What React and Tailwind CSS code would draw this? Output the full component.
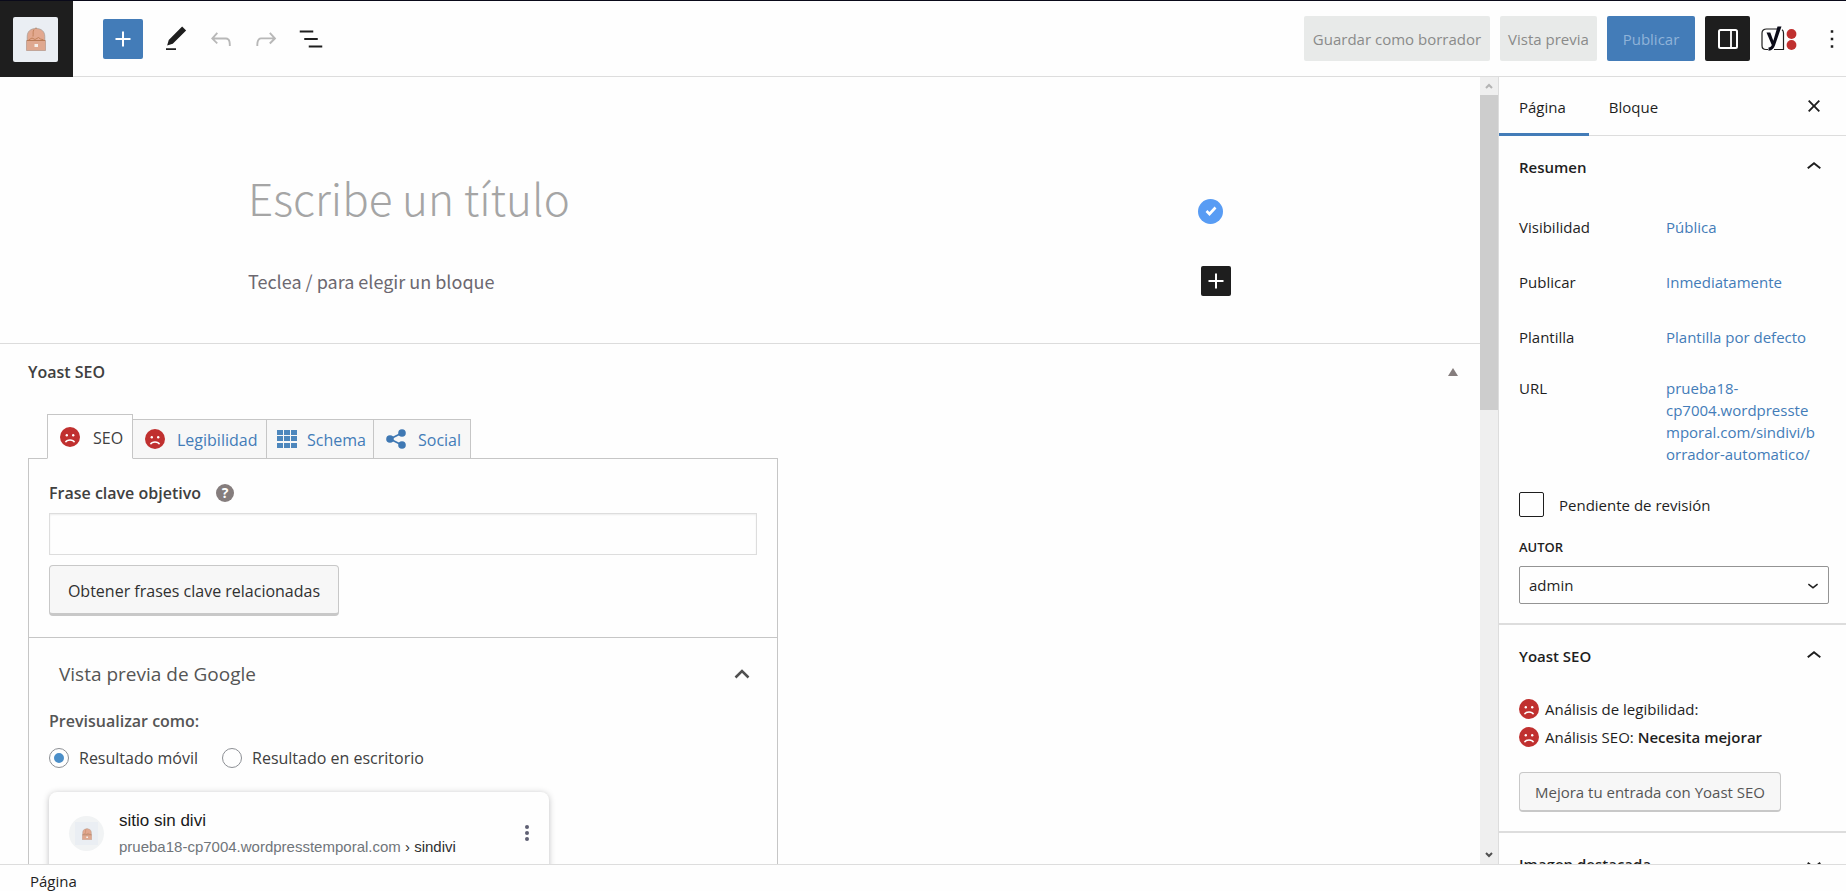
import { useState } from "react";

const PATHS = {
  plus: "M18 11.2h-5.2V6h-1.6v5.2H6v1.6h5.2V18h1.6v-5.2H18z",
  pencil:
    "M20.1 5.1L16.9 2 6.2 12.7l-1.3 4.4 4.5-1.3L20.1 5.1zM4 20.8h8v-1.5H4v1.5z",
  undo: "M18.3 11.7c-.6-.6-1.4-.9-2.3-.9H6.7l2.9-3.3-1.1-1-4.5 5L8.5 16l1-1-2.7-2.7H16c.5 0 .9.2 1.3.5 1 1 1 3.4 1 4.5v.3h1.5v-.2c0-1.5 0-4.3-1.5-5.7z",
  redo: "M15.6 6.5l-1.1 1 2.9 3.3H8c-.9 0-1.7.3-2.3.9-1.4 1.5-1.4 4.2-1.4 5.6v.2h1.5v-.3c0-1.1 0-3.5 1-4.5.3-.3.7-.5 1.3-.5h9.2L14.5 15l1.1 1.1 4.6-4.6-4.6-5z",
  list: "M13.8 5.2H3v1.5h10.8V5.2zm-3.6 12v1.5H21v-1.5H10.2zm7.2-6H6.6v1.5h10.8v-1.5z",
  up: "M6.5 12.4L12 8l5.5 4.4-.9 1.2L12 10l-4.5 3.6-1-1.2z",
  down: "M17.5 11.6L12 16l-5.5-4.4.9-1.2L12 14l4.5-3.6 1 1.2z",
  close:
    "M12 13.06l3.712 3.713 1.061-1.06L13.061 12l3.712-3.712-1.06-1.06L12 10.938 8.288 7.227l-1.061 1.06L10.939 12l-3.712 3.712 1.06 1.061L12 13.061z",
  more: "M13 19h-2v-2h2v2zm0-6h-2v-2h2v2zm0-6h-2V5h2v2z",
};

function Icon({ name, className = "size-[30px]" }) {
  return (
    <svg
      viewBox="0 0 24 24"
      fill="currentColor"
      aria-hidden="true"
      className={`shrink-0 ${className}`}
    >
      <path d={PATHS[name]} />
    </svg>
  );
}

function Hat({ className }) {
  return (
    <svg viewBox="0 0 20 24" aria-hidden="true" className={className}>
      <path
        d="M1.200 13.500V9.500C1.200 4.500 4.500 1.500 10 1.500s8.800 3 8.800 8v4z"
        fill="#e2a88f"
        stroke="#a59a92"
        strokeWidth="0.7"
      />
      <path
        d="M10 .5v1.500M8 2.500C6.500 5 7.500 6.500 7 9.500M2.500 13l3.500-2 3 1.500 3.500-2 2 1.500 3 .8"
        fill="none"
        stroke="#bd7d55"
        strokeWidth="0.9"
      />
      <path
        d="M.5 13.500h19v10H.5z"
        fill="#dfa88f"
        stroke="#b3978a"
        strokeWidth="0.7"
      />
      <path d="M1 13.500h18" stroke="#b9764f" strokeWidth="0.9" />
      <rect x="8.500" y="17" width="3.500" height="3" fill="#f6efea" />
    </svg>
  );
}

function SadFace() {
  return (
    <svg
      viewBox="0 0 20 20"
      aria-hidden="true"
      className="size-5 shrink-0"
    >
      <circle cx="10" cy="10" r="10" fill="#c0302f" />
      <circle cx="6.800" cy="8.300" r="1.200" fill="#fff" />
      <circle cx="13.200" cy="8.300" r="1.200" fill="#fff" />
      <path
        d="M5.500 15.300c1.500-3.200 7.500-3.200 9 0"
        fill="none"
        stroke="#fff"
        strokeWidth="1.500"
      />
    </svg>
  );
}

function DrawerIcon() {
  return (
    <svg viewBox="0 0 20 20" aria-hidden="true" className="size-5">
      <rect
        x="1"
        y="1"
        width="18"
        height="18"
        rx="1.500"
        fill="none"
        stroke="#fff"
        strokeWidth="2"
      />
      <path d="M13 1v18" stroke="#fff" strokeWidth="1.800" />
    </svg>
  );
}

function YoastIcon() {
  return (
    <svg viewBox="0 0 36 28" aria-hidden="true" className="h-7 w-9">
      <path
        d="M17 4H5.500C3 4 1 5.500 1 8v12.500c0 2.500 1.500 4 4 4H7M13 24.500h9.500V8c0-1.500-.5-2.500-1.500-3.200"
        fill="none"
        stroke="#1e1e1e"
        strokeWidth="1.200"
      />
      <path
        d="M5.500 7.500h3.800l3 8.300L16.500 1.500h4l-6.300 18.200c-1.300 3.800-3 5.800-6.700 6v-3.200c1.800-.2 2.800-1 3.300-2.500z"
        fill="#0b0b18"
      />
      <circle cx="30.500" cy="9" r="4.900" fill="#c0302f" />
      <circle cx="30.500" cy="20" r="4.900" fill="#c0302f" />
    </svg>
  );
}

function GridIcon() {
  return (
    <svg viewBox="0 0 20 18" aria-hidden="true" className="h-[18px] w-5">
      {[0, 7, 14].map((x) =>
        [0, 6, 13].map((y) => (
          <rect key={`${x}-${y}`} x={x} y={y} width="6" height="5" fill="#4d87bd" />
        ))
      )}
    </svg>
  );
}

function ShareIcon() {
  return (
    <svg viewBox="0 0 20 20" aria-hidden="true" className="size-5">
      <path d="M16 4L4 10l12 6" fill="none" stroke="#3f78b3" strokeWidth="1.800" />
      <circle cx="4" cy="10" r="3.800" fill="#3f78b3" />
      <circle cx="16" cy="4" r="3.800" fill="#3f78b3" />
      <circle cx="16" cy="16" r="3.800" fill="#3f78b3" />
    </svg>
  );
}

function Header() {
  return (
    <header className="flex h-[77px] shrink-0 border-t border-[#0a0a1a]">
      <a
        href="#"
        aria-label="Ver páginas"
        className="flex w-[73px] items-center bg-[#1e1e1e] pl-[13px]"
      >
        <span className="flex size-[45px] items-center justify-center rounded-xs bg-[#eaeef3]">
          <Hat className="h-6 w-5" />
        </span>
      </a>
      <div className="flex flex-1 items-center justify-between border-b border-[#dddddd] pl-[30px]">
        <div className="flex items-center">
          <button
            type="button"
            aria-label="Añadir bloque"
            className="mr-[18px] flex size-10 items-center justify-center rounded-xs bg-[#437cb8] text-white"
          >
            <Icon name="plus" />
          </button>
          <div className="flex items-center gap-[15px]">
            <button type="button" aria-label="Herramientas">
              <Icon name="pencil" />
            </button>
            <button type="button" aria-label="Deshacer" className="text-[#b8b8b8]">
              <Icon name="undo" />
            </button>
            <button type="button" aria-label="Rehacer" className="text-[#b8b8b8]">
              <Icon name="redo" />
            </button>
            <button type="button" aria-label="Vista de lista">
              <Icon name="list" />
            </button>
          </div>
        </div>
        <div className="flex items-center gap-[10px]">
          <button
            type="button"
            className="h-[45px] w-[186px] rounded-xs bg-[#e8eae9] pt-[2px] text-[#8a8a8a]"
          >
            Guardar como borrador
          </button>
          <button
            type="button"
            className="h-[45px] w-[97px] rounded-xs bg-[#e8eae9] pt-[2px] text-[#8a8a8a]"
          >
            Vista previa
          </button>
          <button
            type="button"
            className="h-[45px] w-[88px] rounded-xs bg-[#437cb8] pt-[2px] text-[#8fb3d9]"
          >
            Publicar
          </button>
          <button
            type="button"
            aria-label="Ajustes"
            className="mr-px flex size-[45px] items-center justify-center rounded-xs bg-[#1e1e1e] text-white"
          >
            <DrawerIcon />
          </button>
          <button type="button" aria-label="Yoast SEO">
            <YoastIcon />
          </button>
          <button type="button" aria-label="Opciones" className="ml-[10px] -mr-[1px]">
            <Icon name="more" />
          </button>
        </div>
      </div>
    </header>
  );
}

function Canvas() {
  return (
    <div className="shrink-0 border-b border-[#dcdcdc] px-[248px] pt-[79px] pb-[47px] font-['Noto_Sans_CJK_JP',sans-serif]">
      <div className="flex items-center justify-between pr-[9px]">
        <input
          type="text"
          aria-label="Título"
          placeholder="Escribe un título"
          className="h-[82px] min-w-0 flex-1 text-[44px] font-light outline-none placeholder:text-[#a5a5a5]"
        />
        <span className="mt-7 flex size-[25px] items-center justify-center rounded-full bg-[#589cf4]">
          <svg viewBox="0 0 12 10" aria-hidden="true" className="h-[10px] w-3">
            <path d="M1.500 5l3 3L10.500 1.500" fill="none" stroke="#fff" strokeWidth="2.600" />
          </svg>
        </span>
      </div>
      <div className="mt-7 flex items-center justify-between pr-px">
        <input
          type="text"
          aria-label="Bloque vacío"
          placeholder="Teclea / para elegir un bloque"
          className="h-[30px] min-w-0 flex-1 text-lg font-normal outline-none placeholder:text-[#6c6870]"
        />
        <button
          type="button"
          aria-label="Añadir bloque"
          className="flex size-[30px] items-center justify-center rounded-xs bg-[#1e1e1e] text-white"
        >
          <Icon name="plus" />
        </button>
      </div>
    </div>
  );
}

const tabs = [
  { name: "SEO", icon: <SadFace />, className: "w-[86px] gap-[13px] pl-3" },
  { name: "Legibilidad", icon: <SadFace />, className: "w-[134px] gap-3 pl-3" },
  { name: "Schema", icon: <GridIcon />, className: "w-[107px] gap-[10px] pl-[10px]" },
  { name: "Social", icon: <ShareIcon />, className: "w-[97px] gap-3 pl-3" },
];

function YoastBox() {
  const [tab, setTab] = useState("SEO");
  const [device, setDevice] = useState("movil");

  return (
    <section className="text-[#404040]">
      <div className="flex h-14 items-center justify-between pr-[22px] pl-7">
        <h2 className="text-base font-semibold">Yoast SEO</h2>
        <button type="button" aria-label="Plegar Yoast SEO">
          <svg viewBox="0 0 10 8" aria-hidden="true" className="h-2 w-[10px]">
            <path d="M5 0l5 8H0z" fill="#857d7d" />
          </svg>
        </button>
      </div>

      <div className="mx-7 mt-[14px] max-w-[750px]">
        <div role="tablist" className="-mb-px flex items-end pl-[19px]">
          {tabs.map((item) => (
            <button
              key={item.name}
              type="button"
              role="tab"
              aria-selected={tab === item.name}
              onClick={() => setTab(item.name)}
              className={`flex items-center border border-[#c6c6c6] text-base not-first:border-l-0 ${item.className} ${
                tab === item.name
                  ? "h-[45px] border-b-[#fefefe] bg-[#fefefe]"
                  : "h-10 bg-[#f7f7f7] text-[#437cb8]"
              }`}
            >
              {item.icon}
              <span className="pt-[2px]">{item.name}</span>
            </button>
          ))}
        </div>

        <div className="border border-[#c6c6c6]">
          <div className="border-b border-[#c6c6c6] px-5 pt-[22px] pb-[21px]">
            <div className="flex items-center gap-[15px]">
              <label htmlFor="frase" className="text-base leading-6 font-semibold">
                Frase clave objetivo
              </label>
              <button
                type="button"
                aria-label="Ayuda"
                className="flex size-[18px] items-center justify-center rounded-full bg-[#857d7d] text-sm font-bold text-white"
              >
                ?
              </button>
            </div>
            <input
              id="frase"
              type="text"
              className="mt-2 h-[42px] w-full border border-[#dddddd] px-2 shadow-[inset_0_1px_2px_rgba(0,0,0,0.07)]"
            />
            <button
              type="button"
              className="mt-[10px] h-[51px] w-[290px] rounded-sm border border-b-[3px] border-[#c8c8c8] bg-[#f7f7f7] pt-[2px] text-base text-[#303030]"
            >
              Obtener frases clave relacionadas
            </button>
          </div>

          <div className="px-5 pt-[22px]">
            <button
              type="button"
              className="flex w-full items-center justify-between pl-[10px] text-[19px] leading-7 text-[#555555]"
            >
              Vista previa de Google
              <svg viewBox="0 0 16 10" aria-hidden="true" className="mr-[7px] h-[10px] w-4">
                <path d="M1.500 8.500L8 2l6.500 6.500" fill="none" stroke="#505050" strokeWidth="2.500" />
              </svg>
            </button>
            <fieldset className="mt-[21px]">
              <legend className="text-base leading-6 font-semibold text-[#555555]">
                Previsualizar como:
              </legend>
              <div className="mt-[13px] flex gap-6 text-base leading-6">
                {[
                  ["movil", "Resultado móvil"],
                  ["escritorio", "Resultado en escritorio"],
                ].map(([value, label]) => (
                  <label key={value} className="flex items-center gap-[10px]">
                    <input
                      type="radio"
                      name="device"
                      checked={device === value}
                      onChange={() => setDevice(value)}
                      className="size-5 appearance-none rounded-full border border-[#8c8f94] bg-[#fefefe] checked:border-[5px] checked:border-[#fefefe] checked:bg-[#4a8ec8] checked:outline checked:-outline-offset-1 checked:outline-[#8c8f94]"
                    />
                    {label}
                  </label>
                ))}
              </div>
            </fieldset>
            <div className="mt-[22px] flex h-[200px] max-w-[500px] items-start rounded-lg pt-[15px] pr-[15px] pl-5 font-['Liberation_Sans',Arial,sans-serif] shadow-[0_1px_6px_rgba(32,33,36,0.28)]">
              <span className="mt-[9px] flex size-[35px] items-center justify-center rounded-full bg-[#f1f3f4]">
                <span className="flex size-[23px] items-center justify-center bg-[#eaeef3]">
                  <Hat className="h-3 w-[10px]" />
                </span>
              </span>
              <div className="ml-[15px] flex-1">
                <div className="text-[17px] leading-7 text-[#1a1a1a]">sitio sin divi</div>
                <div className="text-[15px] leading-6 text-[#70757a]">
                  prueba18-cp7004.wordpresstemporal.com{" "}
                  <span className="text-[#303030]">› sindivi</span>
                </div>
              </div>
              <button type="button" aria-label="Más" className="mt-[18px] mr-[5px]">
                <svg viewBox="0 0 4 16" aria-hidden="true" className="h-4 w-1">
                  <circle cx="2" cy="2" r="2" fill="#5f6073" />
                  <circle cx="2" cy="8" r="2" fill="#5f6073" />
                  <circle cx="2" cy="14" r="2" fill="#5f6073" />
                </svg>
              </button>
            </div>
          </div>
        </div>
      </div>
    </section>
  );
}

// Barra de desplazamiento del lienzo
function ScrollBar() {
  return (
    <div className="flex w-[18px] shrink-0 flex-col justify-between bg-[#efefef]">
      <div className="flex h-[18px] items-center justify-center text-[#b4b4b4]">
        <svg viewBox="0 0 8 6" aria-hidden="true" className="h-[6px] w-2">
          <path d="M1 5l3-3 3 3" fill="none" stroke="currentColor" strokeWidth="2" />
        </svg>
      </div>
      <div className="flex-1">
        <div className="h-[42%] bg-[#cdcdcd]" />
      </div>
      <div className="flex h-[18px] items-center justify-center text-[#505050]">
        <svg viewBox="0 0 8 6" aria-hidden="true" className="h-[6px] w-2">
          <path d="M1 1l3 3 3-3" fill="none" stroke="currentColor" strokeWidth="2" />
        </svg>
      </div>
    </div>
  );
}

function PanelTitle({ title, icon = "up" }) {
  return (
    <button
      type="button"
      className="flex h-[61px] w-full items-center justify-between pr-[17px] pl-5 font-semibold"
    >
      <span className="pt-[2px]">{title}</span>
      <Icon name={icon} />
    </button>
  );
}

const summary = [
  ["Visibilidad", "Pública"],
  ["Publicar", "Inmediatamente"],
  ["Plantilla", "Plantilla por defecto"],
];

function Sidebar() {
  const [pending, setPending] = useState(false);

  return (
    <aside className="w-[348px] shrink-0 overflow-hidden border-l border-[#dddddd]">
      <div className="flex h-[59px] items-stretch justify-between border-b border-[#dddddd] pr-[17px]">
        <div className="flex">
          <button
            type="button"
            className="-mb-px border-b-[3px] border-[#437cb8] pt-1 pr-[23px] pl-5"
          >
            Página
          </button>
          <button type="button" className="px-5 pt-[2px]">
            Bloque
          </button>
        </div>
        <button type="button" aria-label="Cerrar ajustes">
          <Icon name="close" />
        </button>
      </div>

      <div className="border-b-2 border-[#dddddd] pb-[19px]">
        <PanelTitle title="Resumen" />
        <div className="px-5 pt-[3px]">
          {summary.map(([label, value]) => (
            <div key={label} className="flex h-[55px] items-center">
              <span className="w-[147px]">{label}</span>
              <a href="#" className="text-[#437cb8]">
                {value}
              </a>
            </div>
          ))}
          <div className="mt-3 flex leading-[22px]">
            <span className="w-[147px] shrink-0">URL</span>
            <a href="#" className="w-[155px] break-words text-[#437cb8]">
              prueba18-cp7004.wordpresstemporal.com/sindivi/borrador-automatico/
            </a>
          </div>
          <label className="mt-[27px] flex items-center gap-[15px]">
            <input
              type="checkbox"
              checked={pending}
              onChange={(e) => setPending(e.target.checked)}
              className="size-[25px] appearance-none rounded-xs border border-[#1e1e1e] checked:bg-[#437cb8]"
            />
            <span className="pt-[2px]">Pendiente de revisión</span>
          </label>
          <label htmlFor="autor" className="mt-5 block text-[13px] leading-5 font-semibold">
            AUTOR
          </label>
          <div className="relative mt-[9px] mr-[-3px]">
            <select
              id="autor"
              className="h-[38px] w-full appearance-none rounded-xs border border-[#949494] pl-[9px]"
            >
              <option>admin</option>
            </select>
            <Icon
              name="down"
              className="pointer-events-none absolute top-[8px] right-[5px] size-[22px]"
            />
          </div>
        </div>
      </div>

      <div className="border-b-2 border-[#dddddd] pb-[19px]">
        <PanelTitle title="Yoast SEO" />
        <div className="px-5 pt-[9px]">
          <div className="flex h-7 items-center gap-[6px]">
            <SadFace />
            Análisis de legibilidad:
          </div>
          <div className="flex h-7 items-center gap-[6px]">
            <SadFace />
            <span>
              Análisis SEO: <strong className="font-semibold">Necesita mejorar</strong>
            </span>
          </div>
          <button
            type="button"
            className="mt-[21px] h-10 w-[262px] rounded-sm border border-b-2 border-[#c8c8c8] bg-[#f7f7f7] pt-[2px] text-[#555555]"
          >
            Mejora tu entrada con Yoast SEO
          </button>
        </div>
      </div>

      <PanelTitle title="Imagen destacada" icon="down" />
    </aside>
  );
}

function App() {
  return (
    <div className="flex h-screen flex-col overflow-hidden bg-[#fefefe] font-['Open_Sans',sans-serif] text-[15px] text-[#1e1e1e]">
      <Header />
      <div className="flex min-h-0 flex-1">
        <main className="min-w-0 flex-1 overflow-hidden">
          <Canvas />
          <YoastBox />
        </main>
        <ScrollBar />
        <Sidebar />
      </div>
      <footer className="flex h-[27px] shrink-0 items-center border-t border-[#dddddd] px-[30px] pt-[6px]">
        Página
      </footer>
    </div>
  );
}

export default App;
